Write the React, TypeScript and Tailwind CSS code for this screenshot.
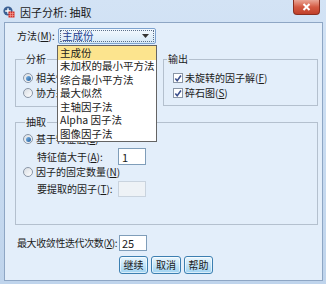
import React from "react";

const methods = [
  "主成份",
  "未加权的最小平方法",
  "综合最小平方法",
  "最大似然",
  "主轴因子法",
  "Alpha 因子法",
  "图像因子法",
];

function Radio({ checked }: { checked?: boolean }) {
  return (
    <span className="flex h-[10px] w-[10px] shrink-0 items-center justify-center rounded-full border border-[#8a96a6] bg-gradient-to-br from-[#d8dde3] to-white">
      {checked ? (
        <span className="h-[5px] w-[5px] rounded-full bg-gradient-to-br from-[#7fb6e6] to-[#1f5f9e]" />
      ) : null}
    </span>
  );
}

function Check() {
  return (
    <span className="flex h-[10px] w-[10px] shrink-0 items-center justify-center border border-[#8a96a6] bg-white">
      <svg width="9" height="9" viewBox="0 0 9 9">
        <path d="M1.5 4.5 L3.6 7 L7.8 1.2" fill="none" stroke="#3b4f8c" strokeWidth="1.8" />
      </svg>
    </span>
  );
}

function Key({ k }: { k: string }) {
  return (
    <>
      (<span className="underline">{k}</span>)
    </>
  );
}

function Btn({ label, w }: { label: string; w: string }) {
  return (
    <button
      type="button"
      className={`${w} h-[18px] rounded-[3px] border border-[#3c7fb1] bg-gradient-to-b from-[#eaf6fd] via-[#c4e5f8] to-[#9fd3f2] text-[10px] leading-none text-[#1b1b1b] shadow-[inset_0_0_0_1px_rgba(255,255,255,0.6)]`}
    >
      {label}
    </button>
  );
}

export default function App() {
  return (
    <div className="flex h-[284px] w-[326px] flex-col overflow-hidden whitespace-nowrap bg-gradient-to-b from-[#d3e3f5] via-[#c9dcf1] to-[#bfd4ec] font-['Noto_Sans_CJK_SC',sans-serif] text-[#1b1b1b]">
      {/* title bar */}
      <div className="flex h-[22px] shrink-0 items-start">
        <div className="ml-[3px] mt-[6px] flex items-center gap-[5px]">
          <svg width="12" height="12" viewBox="0 0 12 12">
            <circle cx="5" cy="5" r="4.6" fill="#3a5f93" />
            <path d="M5 2.2 V7.8 M2.2 5 H7.8" stroke="#ffffff" strokeWidth="1.4" />
            <rect x="5.5" y="5.5" width="6" height="6" fill="#d2312a" />
            <path d="M7.5 5.5 V11.5 M9.5 5.5 V11.5 M5.5 7.5 H11.5 M5.5 9.5 H11.5" stroke="#f3a59c" strokeWidth="0.6" />
          </svg>
          <span className="text-[11px] leading-[12px] text-[#1a1a1a]">因子分析: 抽取</span>
        </div>
        <div className="ml-auto mr-[6px] flex h-[15px] w-[27px] items-center justify-center rounded-b-[4px] border border-t-0 border-[#8b2e1f] bg-gradient-to-b from-[#e9a596] via-[#d45a43] to-[#c0402a]">
          <svg width="9" height="8" viewBox="0 0 9 8">
            <path d="M1.5 1 L7.5 7 M7.5 1 L1.5 7" stroke="#ffffff" strokeWidth="2" />
          </svg>
        </div>
      </div>

      {/* client area */}
      <div className="relative ml-[4px] flex h-[259px] w-[319px] shrink-0 flex-col border border-[#8ea6c4] bg-[#e3eefa] text-[10px] leading-[12px]">
        {/* method row */}
        <div className="mt-[5px] flex h-[16px] items-center">
          <span className="ml-[12px] w-[41px]">
            方法<Key k="M" />:
          </span>
          <div className="flex h-[16px] w-[98px] items-center rounded-[2px] border border-[#7da2ce] bg-gradient-to-b from-[#f3f9fe] to-[#d6e9f8] p-[1px]">
            <div className="flex h-full flex-1 items-center border border-dotted border-[#5a6f8a] pl-[1px]">
              <span className="text-[10.5px] text-[#1f3f8f]">主成份</span>
              <svg className="ml-auto mr-[4px]" width="7" height="4" viewBox="0 0 7 4">
                <path d="M0 0 H7 L3.5 4 Z" fill="#333" />
              </svg>
            </div>
          </div>
        </div>

        {/* analysis / output */}
        <div className="mt-[9px] flex">
          <fieldset className="ml-[10px] h-[54px] w-[141px] border border-[#b4c0ce] pl-[7px]">
            <legend className="ml-[2px] px-[1px] leading-[12px]">分析</legend>
            <div className="mt-[6px] flex flex-col gap-[1px]">
              <div className="flex h-[14px] items-center gap-[3px]">
                <Radio checked />
                <span>相关性矩阵</span>
              </div>
              <div className="flex h-[14px] items-center gap-[3px]">
                <Radio />
                <span>协方差矩阵</span>
              </div>
            </div>
          </fieldset>
          <fieldset className="ml-[7px] h-[53px] w-[155px] border border-[#b4c0ce] pl-[9px]">
            <legend className="ml-[-6px] px-[1px] leading-[12px]">输出</legend>
            <div className="mt-[6px] flex flex-col gap-[1px]">
              <div className="flex h-[14px] items-center gap-[2px]">
                <Check />
                <span>
                  未旋转的因子解<Key k="F" />
                </span>
              </div>
              <div className="flex h-[14px] items-center gap-[2px]">
                <Check />
                <span>
                  碎石图<Key k="S" />
                </span>
              </div>
            </div>
          </fieldset>
        </div>

        {/* extraction */}
        <fieldset className="ml-[10px] mt-[9px] h-[109px] w-[303px] border border-[#b4c0ce] pl-[7px]">
          <legend className="ml-[2px] px-[1px] leading-[12px]">抽取</legend>
          <div className="mt-[4px] flex h-[14px] items-center gap-[3px]">
            <Radio checked />
            <span>
              基于特征值<Key k="E" />
            </span>
          </div>
          <div className="ml-[14px] mt-[2px] flex h-[17px] items-center">
            <span className="w-[81px]">
              特征值大于<Key k="A" />:
            </span>
            <div className="flex h-[17px] w-[28px] items-center border border-[#7f9db9] bg-white pl-[3px] text-[11px]">
              1
            </div>
          </div>
          <div className="flex h-[14px] items-center gap-[3px]">
            <Radio />
            <span>
              因子的固定数量<Key k="N" />
            </span>
          </div>
          <div className="ml-[14px] mt-[2px] flex h-[16px] items-center">
            <span className="w-[81px]">
              要提取的因子<Key k="T" />:
            </span>
            <div className="h-[16px] w-[28px] border border-[#c9d3de] bg-[#eef2f6]" />
          </div>
        </fieldset>

        {/* iterations */}
        <div className="mt-[10px] flex h-[16px] items-center">
          <span className="ml-[12px] w-[102px] tracking-[-0.4px]">
            最大收敛性迭代次数<Key k="X" />:
          </span>
          <div className="flex h-[16px] w-[28px] items-center border border-[#7f9db9] bg-white pl-[2px] text-[11px]">
            25
          </div>
        </div>

        {/* buttons */}
        <div className="ml-[114px] mt-[5px] flex gap-[3px]">
          <Btn label="继续" w="w-[29px]" />
          <Btn label="取消" w="w-[30px]" />
          <Btn label="帮助" w="w-[29px]" />
        </div>

        {/* open dropdown list */}
        <div className="absolute left-[52px] top-[22px] w-[100px] border border-[#646464] bg-white text-[10.5px]">
          {methods.map((m, i) => (
            <div
              key={m}
              className={`flex h-[13.5px] items-center pl-[2px] leading-none ${
                i === 0 ? "bg-[#fce48e]" : ""
              }`}
            >
              {m}
            </div>
          ))}
        </div>
      </div>
    </div>
  );
}
